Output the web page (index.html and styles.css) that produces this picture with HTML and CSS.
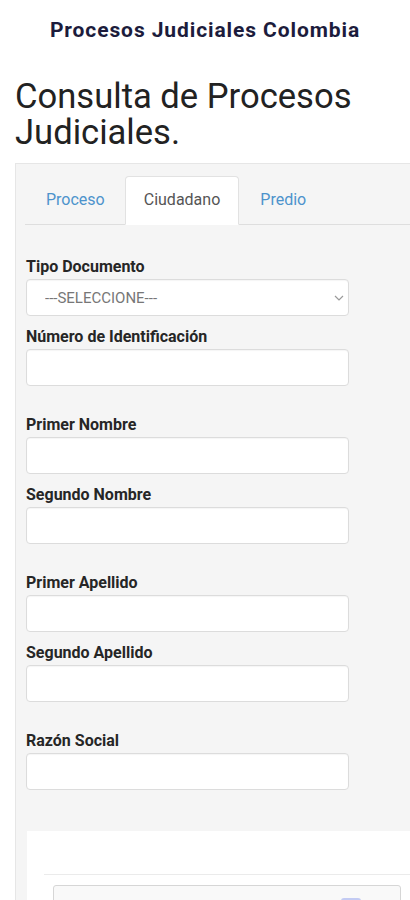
FILE: index.html
```html
<!DOCTYPE html>
<html lang="es">
<head>
    <meta charset="UTF-8">
    <meta name="viewport" content="width=device-width, initial-scale=1.0">
    <title>Procesos Judiciales Colombia</title>
    <link rel="stylesheet" href="styles.css">
</head>
<body>
    <div class="site-title">Procesos Judiciales Colombia</div>

    <h1 class="page-title">Consulta de Procesos Judiciales.</h1>

    <div class="panel">
        <ul class="tabs">
            <li><a href="#">Proceso</a></li>
            <li class="active"><a href="#">Ciudadano</a></li>
            <li><a href="#">Predio</a></li>
        </ul>

        <form class="search-form">
            <div class="field-pair">
                <div class="field">
                    <label for="tipo">Tipo Documento</label>
                    <div class="select-wrap">
                        <select id="tipo" name="tipo">
                            <option value="">---SELECCIONE---</option>
                            <option value="cc">Cédula de Ciudadanía</option>
                            <option value="ce">Cédula de Extranjería</option>
                            <option value="nit">NIT</option>
                        </select>
                        <svg class="chevron" width="10" height="6" viewBox="0 0 10 6">
                            <path d="M1 1 L5 5 L9 1" fill="none" stroke="#9a9a9a" stroke-width="1.2"/>
                        </svg>
                    </div>
                </div>
                <div class="field">
                    <label for="numero">Número de Identificación</label>
                    <input type="text" id="numero" name="numero">
                </div>
            </div>

            <div class="field-pair">
                <div class="field">
                    <label for="nombre1">Primer Nombre</label>
                    <input type="text" id="nombre1" name="nombre1">
                </div>
                <div class="field">
                    <label for="nombre2">Segundo Nombre</label>
                    <input type="text" id="nombre2" name="nombre2">
                </div>
            </div>

            <div class="field-pair">
                <div class="field">
                    <label for="apellido1">Primer Apellido</label>
                    <input type="text" id="apellido1" name="apellido1">
                </div>
                <div class="field">
                    <label for="apellido2">Segundo Apellido</label>
                    <input type="text" id="apellido2" name="apellido2">
                </div>
            </div>

            <div class="field-pair">
                <div class="field">
                    <label for="razon">Razón Social</label>
                    <input type="text" id="razon" name="razon">
                </div>
            </div>

            <div class="captcha-area">
                <div class="captcha-frame">
                    <div class="captcha-box">
                        <span class="captcha-logo"></span>
                    </div>
                </div>
            </div>
        </form>
    </div>
</body>
</html>
```

FILE: styles.css
```css
body {
    font-family: Roboto, "Liberation Sans", Arial, sans-serif;
    margin: 0;
    padding: 0;
    background-color: #fff;
    color: #333;
    overflow-x: hidden;
}

.site-title {
    padding-top: 18px;
    text-align: center;
    font-size: 21px;
    line-height: 24px;
    font-weight: 700;
    letter-spacing: 0.9px;
    color: #1c1c3c;
}

.page-title {
    margin: 36px 15px 0;
    font-size: 34.6px;
    line-height: 36px;
    font-weight: 400;
    color: #222;
}

.panel {
    margin: 13px -30px 0 15px;
    padding: 12px 0 0;
    background-color: #f5f5f5;
    border: 1px solid #e6e6e6;
    border-right: none;
    min-height: 760px;
}

.tabs {
    display: flex;
    margin: 0 0 0 9px;
    padding: 0;
    list-style: none;
    border-bottom: 1px solid #dedede;
}

.tabs li {
    margin-bottom: -1px;
}

.tabs a {
    display: block;
    padding: 0 19px 0 20px;
    height: 47px;
    line-height: 46px;
    font-size: 16px;
    color: #4d93cc;
    text-decoration: none;
    border: 1px solid transparent;
    border-radius: 4px 4px 0 0;
}

.tabs .active a {
    padding: 0 18px;
    color: #555;
    background-color: #fff;
    border-color: #e2e2e2 #e2e2e2 #fff;
}

.search-form {
    display: flex;
    flex-direction: column;
    gap: 30px;
    padding: 33px 0 0 10px;
}

.field-pair {
    display: flex;
    flex-direction: column;
    gap: 12px;
}

label {
    display: block;
    margin-bottom: 4px;
    font-size: 16px;
    line-height: 17px;
    font-weight: 700;
    color: #262626;
}

input, select {
    box-sizing: border-box;
    display: block;
    width: 323px;
    height: 37px;
    padding: 0 18px;
    font-family: inherit;
    font-size: 15px;
    color: #777;
    background-color: #fff;
    border: 1px solid #dcdcdc;
    border-radius: 4px;
    box-shadow: inset 0 1px 1px rgba(0, 0, 0, 0.04);
}

select {
    appearance: none;
    -webkit-appearance: none;
}

.select-wrap {
    position: relative;
    width: 323px;
}

.chevron {
    position: absolute;
    right: 5px;
    top: 16px;
}

.captcha-area {
    margin: 11px 0 0 1px;
    padding: 43px 0 40px 17px;
    background-color: #fff;
}

.captcha-frame {
    padding: 10px 0 0 9px;
    border-top: 1px solid #ebebeb;
}

.captcha-box {
    width: 348px;
    height: 70px;
    padding: 12px 0 0 287px;
    box-sizing: border-box;
    background-color: #f9f9f9;
    border: 1px solid #d6d6d6;
    border-radius: 3px;
}

.captcha-logo {
    display: block;
    width: 20px;
    height: 20px;
    background-color: #c3cbf3;
    border-radius: 3px;
}
```
